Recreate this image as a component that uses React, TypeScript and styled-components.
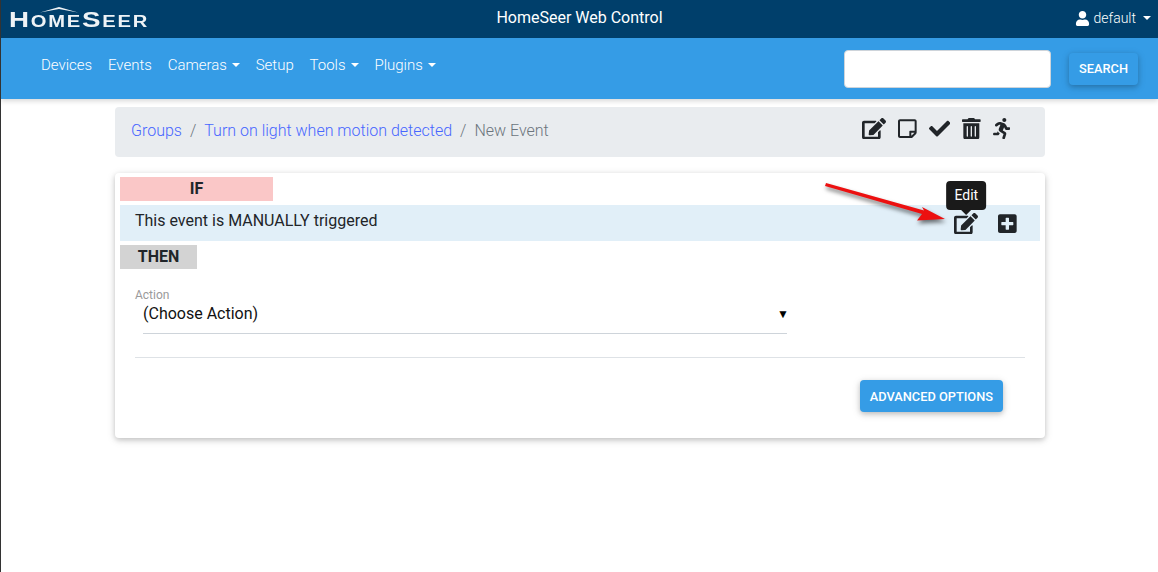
import styled, { createGlobalStyle } from "styled-components";
import { FaCheck, FaEdit, FaPlusSquare, FaRegStickyNote, FaRunning, FaTrashAlt, FaUser } from "react-icons/fa";

const GlobalStyle = createGlobalStyle`
  html, body { margin: 0; padding: 0; background: #fff; }
  body { font-family: Roboto, "Liberation Sans", sans-serif; color: #212529; font-size: 16px; }
`;

const Page = styled.div`
  position: relative;
  min-height: 572px;
  border-left: 1px solid #333;
  box-sizing: border-box;
  overflow: hidden;
`;

const TopBar = styled.header`
  height: 38px;
  background: #003f6b;
  display: flex;
  align-items: center;
  justify-content: space-between;
  padding: 0 8px;
  color: #fff;
  position: relative;
`;

const Logo = styled.div`
  position: relative;
  width: 140px;
  height: 38px;
  svg { position: absolute; left: 31px; top: 7px; }
`;

const LogoText = styled.div`
  font-family: "Liberation Sans", sans-serif;
  font-weight: 700;
  font-size: 22px;
  letter-spacing: 1.4px;
  line-height: 22px;
  padding-top: 9px;
  color: #eef3f6;
  transform: scaleX(1.26);
  transform-origin: left center;
  white-space: nowrap;
  small { font-size: 16px; font-weight: 700; }
`;

const Title = styled.div`
  position: absolute;
  left: 0;
  right: 0;
  top: 8px;
  line-height: 19px;
  text-align: center;
  font-size: 16px;
  pointer-events: none;
`;

const Caret = styled.span`
  display: inline-block;
  margin-left: 5px;
  border-top: 4.2px solid currentColor;
  border-left: 4.2px solid transparent;
  border-right: 4.2px solid transparent;
`;

const UserMenu = styled.div`
  display: flex;
  align-items: center;
  gap: 3px;
  font-size: 14px;
  font-weight: 300;
  margin: -2px -1px 0 0;
  svg { width: 15px; height: 15px; }
  ${Caret} { margin-left: 4px; }
`;

const NavBar = styled.nav`
  height: 61px;
  background: #359ce6;
  display: flex;
  align-items: center;
  justify-content: space-between;
  padding: 0 20px 0 40px;
  box-shadow: 0 2px 5px rgba(0, 0, 0, 0.16);
  color: #fff;
`;

const NavLinks = styled.div`
  display: flex;
  gap: 15.8px;
  font-size: 15px;
  font-weight: 300;
  margin-top: -7px;
`;

const NavLink = styled.span`
  display: inline-flex;
  align-items: center;
`;

const SearchForm = styled.div`
  display: flex;
  align-items: center;
  gap: 18px;
`;

const SearchInput = styled.div`
  width: 205px;
  height: 36px;
  background: #fff;
  border: 1px solid #ced4da;
  border-radius: 4px;
`;

const Button = styled.button`
  background: #359ce6;
  color: #fff;
  border: 0;
  border-radius: 4px;
  font-family: inherit;
  font-size: 12.8px;
  font-weight: 500;
  box-shadow: 0 2px 5px rgba(0, 0, 0, 0.18), 0 2px 10px rgba(0, 0, 0, 0.12);
  height: 32px;
  padding: 0 10px;
  white-space: nowrap;
`;

const Content = styled.main`
  width: 930px;
  margin: 8px 0 0 114px;
`;

const Breadcrumb = styled.div`
  height: 50px;
  background: #e9ecef;
  border-radius: 4px;
  display: flex;
  justify-content: space-between;
  padding: 0 35px 0 16px;
  margin-bottom: 16px;
`;

const Crumbs = styled.div`
  display: flex;
  gap: 8px;
  font-size: 16px;
  font-weight: 300;
  line-height: 20px;
  padding-top: 14px;
  color: #6c757d;
`;

const CrumbLink = styled.span`
  color: #4766ff;
`;

const ToolIcons = styled.div`
  display: flex;
  gap: 12px;
  padding-top: 11px;
  color: #212529;
  svg { display: block; height: 21.33px; }
`;

// react-icons sets a 1em box, so the icon widths follow the glyph ratios by hand
const EditGlyph = styled(FaEdit)`
  width: 24px;
`;

const NoteGlyph = styled(FaRegStickyNote)`
  width: 18.67px;
`;

const CheckGlyph = styled(FaCheck)`
  width: 21.33px;
`;

const TrashGlyph = styled(FaTrashAlt)`
  width: 18.67px;
`;

const RunGlyph = styled(FaRunning)`
  width: 17.33px;
`;

const PlusGlyph = styled(FaPlusSquare)`
  width: 18.67px;
`;

const Card = styled.section`
  height: 265px;
  background: #fff;
  border-radius: 4px;
  box-shadow: 0 2px 5px rgba(0, 0, 0, 0.16), 0 2px 10px rgba(0, 0, 0, 0.12);
  padding: 4px 5px 0;
  box-sizing: border-box;
`;

const Tag = styled.div<{ $bg: string; $width: number }>`
  width: ${(p) => p.$width}px;
  height: 24px;
  line-height: 24px;
  background: ${(p) => p.$bg};
  text-align: center;
  font-weight: 700;
  font-size: 16px;
`;

const TriggerRow = styled.div`
  height: 36px;
  margin: 4px 0;
  background: #e1eff8;
  display: flex;
  justify-content: space-between;
  padding: 0 23px 0 15px;
  font-size: 16px;
  line-height: 20px;
`;

const TriggerText = styled.span`
  padding-top: 6px;
`;

const RowIcons = styled.div`
  display: flex;
  gap: 20px;
  padding-top: 8px;
  color: #212529;
  svg { display: block; height: 21.33px; }
`;

const EditIcon = styled.span`
  position: relative;
  display: block;
`;

const Tooltip = styled.div`
  position: absolute;
  left: 50%;
  top: -32px;
  transform: translateX(-50%);
  background: #1a1a1a;
  color: #fff;
  font-size: 14px;
  line-height: 21px;
  padding: 4px 8px;
  border-radius: 4px;
  &::after {
    content: "";
    position: absolute;
    left: 50%;
    bottom: -5px;
    margin-left: -5px;
    border-top: 5px solid #1a1a1a;
    border-left: 5px solid transparent;
    border-right: 5px solid transparent;
  }
`;

const ActionBlock = styled.div`
  padding: 18px 15px 0;
`;

const ActionLabel = styled.div`
  font-size: 12px;
  line-height: 16px;
  color: #9a9a9a;
`;

const ActionSelect = styled.div`
  width: 644px;
  height: 29px;
  padding-top: 1px;
  margin-left: 8px;
  border-bottom: 1px solid #ced4da;
  display: flex;
  align-items: flex-start;
  justify-content: space-between;
  font-size: 16px;
  line-height: 20px;
  color: #111;
`;

const SelectArrow = styled.span`
  font-size: 12px;
  margin-right: -2px;
  color: #000;
`;

const Divider = styled.hr`
  border: 0;
  border-top: 1px solid #dee2e6;
  margin: 23px 0 22px;
`;

const CardFooter = styled.div`
  display: flex;
  justify-content: flex-end;
  padding-right: 22px;
`;

const Arrow = styled.svg`
  position: absolute;
  left: 820px;
  top: 178px;
  filter: drop-shadow(1px 3px 2px rgba(0, 0, 0, 0.55));
`;

const App = () => {
  return (
    <Page>
      <GlobalStyle />
      <TopBar>
        <Logo>
          <svg width="38" height="6" viewBox="0 0 38 6">
            <path d="M0 5.5 L19 0 L38 5.5 L19 2 Z" fill="#eef3f6" />
          </svg>
          <LogoText>
            H<small>OME</small>S<small>EER</small>
          </LogoText>
        </Logo>
        <Title>HomeSeer Web Control</Title>
        <UserMenu>
          <FaUser />
          default
          <Caret />
        </UserMenu>
      </TopBar>

      <NavBar>
        <NavLinks>
          <NavLink>Devices</NavLink>
          <NavLink>Events</NavLink>
          <NavLink>
            Cameras
            <Caret />
          </NavLink>
          <NavLink>Setup</NavLink>
          <NavLink>
            Tools
            <Caret />
          </NavLink>
          <NavLink>
            Plugins
            <Caret />
          </NavLink>
        </NavLinks>
        <SearchForm>
          <SearchInput />
          <Button>SEARCH</Button>
        </SearchForm>
      </NavBar>

      <Content>
        <Breadcrumb>
          <Crumbs>
            <CrumbLink>Groups</CrumbLink>
            <span>/</span>
            <CrumbLink>Turn on light when motion detected</CrumbLink>
            <span>/</span>
            <span>New Event</span>
          </Crumbs>
          <ToolIcons>
            <EditGlyph />
            <NoteGlyph />
            <CheckGlyph />
            <TrashGlyph />
            <RunGlyph />
          </ToolIcons>
        </Breadcrumb>

        <Card>
          <Tag $bg="#fac7c7" $width={153}>IF</Tag>
          <TriggerRow>
            <TriggerText>This event is MANUALLY triggered</TriggerText>
            <RowIcons>
              <EditIcon>
                <Tooltip>Edit</Tooltip>
                <EditGlyph />
              </EditIcon>
              <PlusGlyph />
            </RowIcons>
          </TriggerRow>
          <Tag $bg="#d3d3d3" $width={77}>THEN</Tag>
          <ActionBlock>
            <ActionLabel>Action</ActionLabel>
            <ActionSelect>
              (Choose Action)
              <SelectArrow>▼</SelectArrow>
            </ActionSelect>
            <Divider />
            <CardFooter>
              <Button>ADVANCED OPTIONS</Button>
            </CardFooter>
          </ActionBlock>
        </Card>
      </Content>

      <Arrow width="130" height="50" viewBox="0 0 130 50">
        <path d="M5 5 L103 32.5 L101 29 L124 41 L96 42.5 L101 36 L4 8 Z" fill="#ec1010" />
      </Arrow>
    </Page>
  );
};

export default App;
